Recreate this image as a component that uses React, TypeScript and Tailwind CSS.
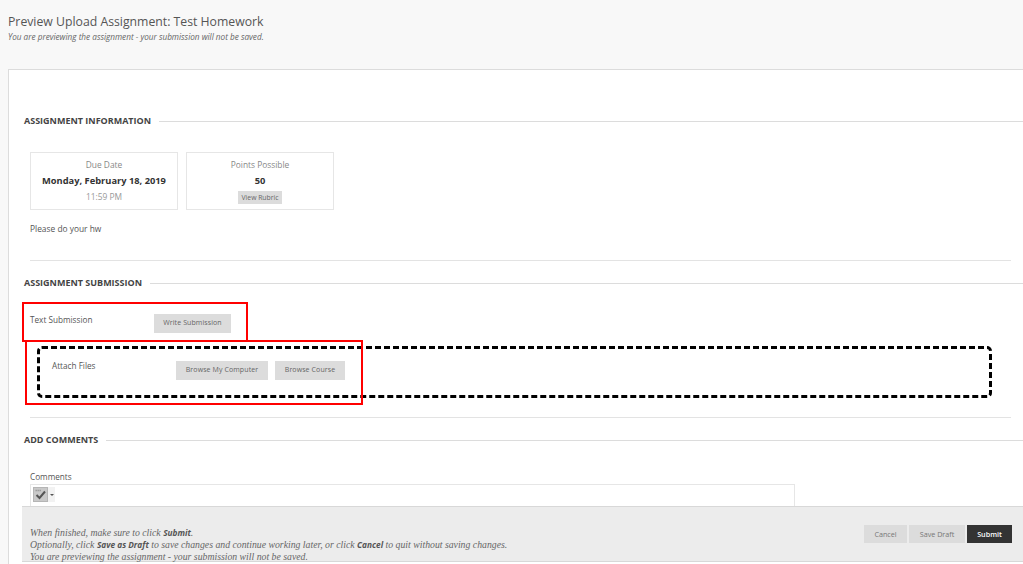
function SectionTitle({ title, className }: { title: string; className: string }) {
  return (
    <div className={`flex items-center ${className}`}>
      <h2 className="text-[9px] leading-[14px] font-bold text-[#444] uppercase whitespace-nowrap">{title}</h2>
      <div className="ml-2 h-px flex-1 bg-[#dcdcdc]" />
    </div>
  )
}

function GreyButton({ label, className }: { label: string; className: string }) {
  return (
    <button className={`h-[19px] bg-[#dcdcdc] text-[7px] tracking-[0.1px] text-[#666] ${className}`}>{label}</button>
  )
}

function SpellIcon() {
  return (
    <svg viewBox="0 0 15 15" className="h-[15px] w-[15px]">
      <rect x="0.5" y="0.5" width="14" height="14" fill="#c9c9c9" stroke="#b5b5b5" />
      <path d="M3.5 8 L6.5 11 L12 4.5" fill="none" stroke="#555" strokeWidth="2" />
      <path d="M2.5 3.5 H8" stroke="#999" strokeWidth="1.4" strokeDasharray="1.4 0.6" />
    </svg>
  )
}

export default function App() {
  return (
    <div className="relative h-[564px] w-[1023px] overflow-hidden bg-[#f8f8f8] font-['Open_Sans',sans-serif]">
      <header className="pl-2 pt-[13px] h-[69px]">
        <h1 className="text-[12.25px] leading-[17px] text-[#555]">Preview Upload Assignment: Test Homework</h1>
        <p className="text-[8.2px] leading-[10px] mt-[2px] italic text-[#666]">
          You are previewing the assignment - your submission will not be saved.
        </p>
      </header>

      <main className="ml-2 h-[495px] border-l border-t border-[#dcdcdc] bg-white pl-[15px]">
        <SectionTitle title="Assignment Information" className="pt-[44px]" />

        <div className="ml-[6px] mt-[24px] flex gap-2">
          <div className="flex h-[58px] w-[148px] flex-col items-center border border-[#e6e6e6] pt-[5px]">
            <span className="text-[8.4px] leading-[14px] text-[#888]">Due Date</span>
            <span className="mt-[2px] text-[9.3px] leading-[14px] font-bold text-[#333]">Monday, February 18, 2019</span>
            <span className="mt-[2px] text-[8.4px] leading-[14px] text-[#999]">11:59 PM</span>
          </div>
          <div className="flex h-[58px] w-[148px] flex-col items-center border border-[#e6e6e6] pt-[5px]">
            <span className="text-[8.4px] leading-[14px] text-[#888]">Points Possible</span>
            <span className="mt-[2px] text-[9.3px] leading-[14px] font-bold text-[#333]">50</span>
            <button className="mt-[3px] h-[13px] w-[44px] bg-[#dcdcdc] text-[6.8px] leading-[13px] text-[#666]">View Rubric</button>
          </div>
        </div>

        <p className="ml-[6px] mt-[12px] text-[8.4px] leading-[14px] text-[#555]">Please do your hw</p>

        <div className="ml-[6px] mr-[12px] mt-[24px] h-px bg-[#e3e3e3]" />

        <SectionTitle title="Assignment Submission" className="mt-[15px]" />

        <div className="ml-[6px] mt-[23px] flex">
          <span className="w-[124px] text-[8.2px] leading-[14px] text-[#555]">Text Submission</span>
          <GreyButton label="Write Submission" className="mt-[1px] w-[77px]" />
        </div>

        <div className="ml-[28px] mt-[26px] flex">
          <span className="w-[124px] text-[8.2px] leading-[14px] text-[#555]">Attach Files</span>
          <GreyButton label="Browse My Computer" className="mt-[2px] w-[92px]" />
          <GreyButton label="Browse Course" className="ml-[7px] mt-[2px] w-[70px]" />
        </div>

        <div className="ml-[6px] mr-[12px] mt-[37px] h-px bg-[#e3e3e3]" />

        <SectionTitle title="Add Comments" className="mt-[15px]" />

        <p className="ml-[6px] mt-[23px] text-[8.2px] leading-[14px] text-[#555]">Comments</p>
        <div className="ml-[6px] h-[24px] w-[765px] border border-[#e6e6e6] pl-[2px] pt-[2px]">
          <div className="flex h-[15px] w-[22px] items-center bg-[#f2f2f2]">
            <SpellIcon />
            <span className="ml-[2px] h-0 w-0 border-x-2 border-t-2 border-x-transparent border-t-[#555]" />
          </div>
        </div>
      </main>

      {/* sticky submit bar */}
      <footer className="absolute bottom-[2px] left-[22px] right-0 flex h-[56px] justify-between border-y border-[#d8d8d8] bg-[#ececec] pl-2 pr-[11px] pt-[20px] font-['Liberation_Serif',serif] text-[9.75px] leading-[12px] italic text-[#666]">
        <div>
          <p>When finished, make sure to click <b className="font-['Open_Sans',sans-serif] text-[8.3px] text-[#555]">Submit</b>.</p>
          <p>
            Optionally, click <b className="font-['Open_Sans',sans-serif] text-[8.3px] text-[#555]">Save as Draft</b> to save changes and continue working later, or click <b className="font-['Open_Sans',sans-serif] text-[8.3px] text-[#555]">Cancel</b> to quit without saving changes.
          </p>
          <p>You are previewing the assignment - your submission will not be saved.</p>
        </div>
        <div className="-mt-[2px] flex gap-[2px] font-['Open_Sans',sans-serif] not-italic text-[7.2px]">
          <button className="h-[18px] w-[43px] bg-[#dcdcdc] text-[#777]">Cancel</button>
          <button className="h-[18px] w-[56px] bg-[#dcdcdc] text-[#777]">Save Draft</button>
          <button className="h-[18px] w-[45px] bg-[#333] font-semibold text-white">Submit</button>
        </div>
      </footer>

      {/* annotations drawn over the page */}
      <div className="absolute left-[22px] top-[302px] h-[40px] w-[226px] border-[2px] border-[#ff0000]" />
      <div className="absolute left-[37px] top-[346px] h-[52px] w-[955px] rounded-[5px] border-[3px] border-dashed border-black" />
      <div className="absolute left-[25px] top-[340px] h-[65px] w-[338px] border-[2px] border-[#ff0000]" />
    </div>
  )
}
